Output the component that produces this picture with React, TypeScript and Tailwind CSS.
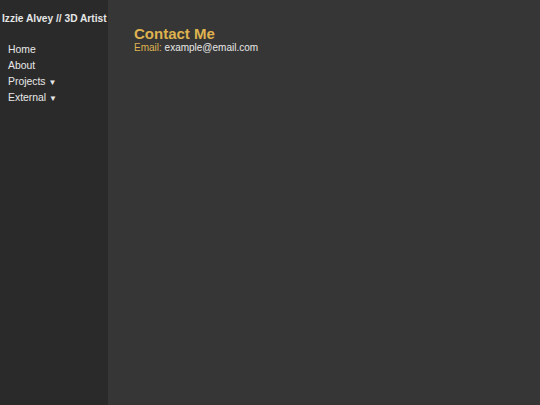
export default function App() {
  return (
    <div className="flex h-[405px] w-[540px] font-['Liberation_Sans',Arial,sans-serif]">
      <aside className="w-[108px] shrink-0 bg-[#2a2a2a] pt-[13px]">
        <div className="whitespace-nowrap pl-[2px] text-[10.2px] font-bold leading-[12px] text-[#e6e6e6]">
          Izzie Alvey // 3D Artist
        </div>
        <nav className="mt-[17px] flex flex-col pl-[8px] text-[10.4px] leading-[16px] text-[#e8e8e8]">
          <span>Home</span>
          <span>About</span>
          <span>Projects <span className="inline-block align-baseline text-[8px] leading-none">▼</span></span>
          <span>External <span className="inline-block align-baseline text-[8px] leading-none">▼</span></span>
        </nav>
      </aside>
      <main className="flex-1 bg-[#363636] pl-[26px] pt-[25px]">
        <h1 className="text-[15px] font-bold leading-[17px] text-[#dfb24f]">Contact Me</h1>
        <p className="text-[10px] leading-[12px] text-[#e8e8e8]">
          <span className="text-[#dfb24f]">Email:</span> example@email.com
        </p>
      </main>
    </div>
  );
}
